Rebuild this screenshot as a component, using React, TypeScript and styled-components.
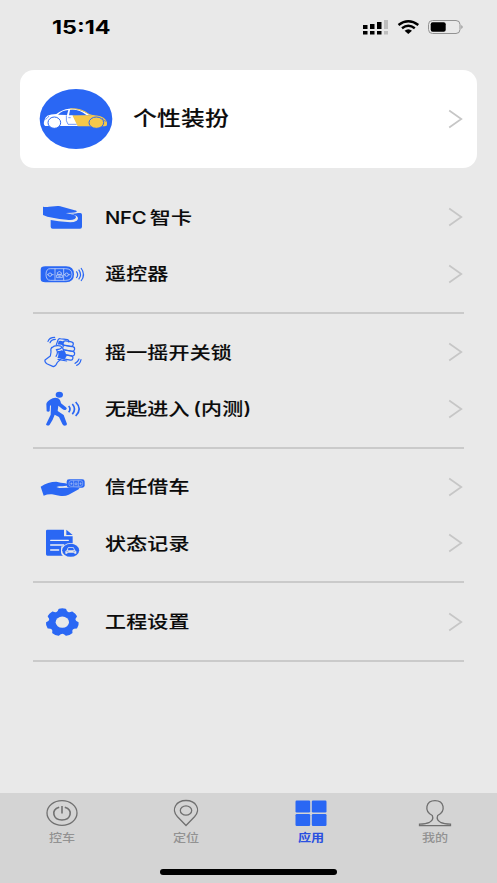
import React from 'react';
import styled, { createGlobalStyle } from 'styled-components';

const BLUE = '#2a67f4';
const SANS = '"Noto Sans CJK SC", sans-serif';

const GlobalStyle = createGlobalStyle`
  *, *::before, *::after { box-sizing: border-box; }
  body { margin: 0; background: #e9e9e9; }
`;

const Screen = styled.div`
  display: flex;
  flex-direction: column;
  width: 497px;
  height: 883px;
  overflow: hidden;
  background: #e9e9e9;
  color: #0b0b0b;
  font-family: ${SANS};
`;

const StatusBar = styled.header`
  display: flex;
  align-items: center;
  justify-content: space-between;
  height: 54px;
  padding: 0 33px 0 52px;
`;

const Clock = styled.time`
  font: 700 18.5px/20px Inter, sans-serif;
  color: #000;
  transform: scaleX(1.26);
  transform-origin: left center;
`;

const StatusIcons = styled.svg`
  width: 101px;
  height: 18px;
  display: block;
`;

const Card = styled.button`
  display: flex;
  align-items: center;
  flex: none;
  width: 457px;
  height: 98px;
  margin: 15.5px 20px 21px;
  padding: 0 14px 0 19px;
  border: 0;
  border-radius: 14px;
  background: #fff;
  color: inherit;
  text-align: left;
`;

const CarBadge = styled.svg`
  width: 74px;
  height: 62px;
  margin-right: 20px;
`;

const Label = styled.span<{ $size?: number }>`
  flex: 1;
  padding-top: 1px;
  font: 500 ${(p) => p.$size ?? 17.6}px/28px Inter, ${SANS};
  letter-spacing: 0.2px;
  word-spacing: -2px;
  white-space: nowrap;
  -webkit-text-stroke: 0.12px currentColor;
  transform: scaleX(1.19);
  transform-origin: left center;
`;

const Latin = styled.span`
  font-size: 17px;
  letter-spacing: -0.2px;
`;

const Chevron = styled.svg`
  width: 15px;
  height: 20px;
  flex: none;
  fill: none;
  stroke: #c6c6c6;
  stroke-width: 1.7;
`;

const Group = styled.section`
  width: 431px;
  margin: 0 33px 10px;
  padding-bottom: 9.8px;
  border-bottom: 2px solid #cacaca;
`;

const Row = styled.button`
  display: flex;
  align-items: center;
  width: 100%;
  height: 56.5px;
  padding: 0 1px 0 3px;
  border: 0;
  background: none;
  color: inherit;
  text-align: left;
`;

const RowIcon = styled.svg`
  width: 52px;
  height: 44px;
  flex: none;
  margin-right: 17px;
  fill: ${BLUE};
`;

const Menu = styled.main`
  flex: 1;
  padding-top: 0.5px;
`;

const TabBar = styled.nav`
  display: grid;
  grid-template-columns: repeat(4, 1fr);
  grid-template-rows: 76px 14px;
  height: 90px;
  background: #d4d4d4;
`;

const Tab = styled.button<{ $active?: boolean }>`
  display: flex;
  flex-direction: column;
  align-items: center;
  padding: 5px 0 0;
  border: 0;
  background: none;
  color: ${(p) => (p.$active ? '#2a50e0' : '#929292')};
  font: ${(p) => (p.$active ? 700 : 500)} 11px/16px ${SANS};
`;

const TabIcon = styled.svg`
  width: 34px;
  height: 30px;
  margin-bottom: 1px;
  fill: none;
  stroke: #707070;
  stroke-width: 1.3;
`;

const TabLabel = styled.span`
  transform: scaleX(1.19);
`;

const HomeIndicator = styled.div`
  grid-column: 1 / -1;
  justify-self: center;
  width: 177px;
  height: 5.5px;
  border-radius: 3px;
  background: #000;
`;

const Arrow = () => (
  <Chevron viewBox="0 0 15 20">
    <path d="M1.2 1.5 13.3 10 1.2 18.5" />
  </Chevron>
);

// Seven-toothed outline, slightly wider than tall, with curved valleys.
const gearPath = (() => {
  const step = (Math.PI * 2) / 7;
  const point = (angle: number, radius: number) =>
    `${(97 + Math.cos(angle) * radius * 1.19).toFixed(1)} ${(82 + Math.sin(angle) * radius).toFixed(1)}`;
  let d = '';
  for (let i = 0; i < 7; i += 1) {
    const a = -Math.PI / 2 + i * step;
    d += `${i ? '' : `M${point(a - 0.2, 39)}`}Q${point(a, 41)} ${point(a + 0.2, 39)}`;
    d += `Q${point(a + step / 2, 26)} ${point(a + step - 0.2, 39)}`;
  }
  return `${d}Z`;
})();

const CardHandIcon = () => (
  <RowIcon viewBox="18 15 156 132">
    <path d="M39 50Q49 52 57 50L83 48Q89 47 96 50L134 61Q143 63 139 66Q134 68 125 68L107 69Q122 72 134 76Q142 82 134 87Q125 92 110 89Q88 88 68 83Q51 81 39 75Z" />
    <path d="M144 69H151Q156 69 156 74V110Q156 116 150 116H68Q62 116 62 110V90Q85 95 112 96Q130 98 140 92Q148 85 140 78Q131 72 119 71Q137 72 144 69Z" />
  </RowIcon>
);

const RemoteIcon = () => (
  <RowIcon viewBox="18 186 156 132">
    <path d="M46 229H108Q132 229 132 253Q132 277 108 277H46Q32 277 32 267V239Q32 229 46 229Z" />
    <g fill="none" stroke="#e9edf7" strokeWidth="2">
      <path d="M61 236H106Q126 236 126 253Q126 271 106 271H61Q48 271 48 253Q48 236 61 236ZM75 236V271M101 236V271" />
      <ellipse cx="60" cy="254" rx="5" ry="5" />
      <path d="M65 254H71M54 254H51" />
      <ellipse cx="110" cy="254" rx="5" ry="5" />
      <path d="M115 254H121M105 254H102" />
      <path d="M82 253V248Q88 241 94 248V253ZM80 255H97V263H80ZM85 259H92" />
    </g>
    <g fill="none" stroke={BLUE} strokeWidth="3.6">
      <path d="M139 244Q147 254 139 264M146 239Q157 254 146 268M153 234Q168 254 153 273" />
    </g>
  </RowIcon>
);

const ShakeIcon = () => (
  <RowIcon viewBox="18 16 156 132">
    <g fill="none" stroke={BLUE} strokeWidth="3.6" strokeLinejoin="round" strokeLinecap="round">
      <path d="M54 50Q58 38 74 38M60 54Q64 44 76 44" />
      <path d="M153 105Q150 119 140 122M147 103Q144 112 135 116" />
      <path d="M79 60 84 46Q86 41 91 42L112 45Q118 47 116 52M66 68Q61 72 63 82L61 94 45 106Q43 113 52 118L70 126Q78 124 82 113L92 104" />
      <path d="M66 69Q72 62 85 63Q96 63 95 69Q92 74 79 75Q86 83 78 95" />
      <rect x="99" y="50" width="31" height="14" rx="7" transform="rotate(10 114 57)" />
      <rect x="98" y="64" width="36" height="14" rx="7" transform="rotate(10 116 71)" />
      <rect x="98" y="78" width="36" height="14" rx="7" transform="rotate(10 116 85)" />
      <rect x="99" y="92" width="30" height="13" rx="6.5" transform="rotate(10 114 98)" />
      <path d="M84 104 110 109" />
    </g>
    <path d="M83 78Q90 80 94 77L105 80 110 94 103 105 82 99Q88 90 83 78ZM91 48 105 51 99 56V64Q94 59 83 60L86 49Z" />
  </RowIcon>
);

const WalkIcon = () => (
  <RowIcon viewBox="18 186 156 132">
    <ellipse cx="88" cy="209" rx="11" ry="9" />
    <path d="M68 220Q76 216 84 220Q91 223 93 235L108 247Q113 251 108 254Q103 257 97 252L85 242 83 258 101 270 111 297Q111 302 104 302Q99 302 97 297L87 276 74 269 68 284 59 299Q56 303 50 301Q47 300 49 296L62 269 63 242 60 241 59 258Q56 262 50 259L49 237Q49 230 68 220Z" />
    <g fill="none" stroke={BLUE} strokeWidth="5">
      <path d="M116 243Q124 252 116 262M127 237Q140 252 127 268M137 231Q158 252 137 273" />
    </g>
  </RowIcon>
);

const LendIcon = () => (
  <RowIcon viewBox="18 0 156 132">
    <path d="M32 65Q54 50 79 50Q92 54 106 55Q114 57 112 61Q109 64 87 64L79 66 88 69 112 68Q134 66 145 69Q151 70 146 73L116 89Q104 95 88 92L66 88Q53 87 41 92Z" />
    <rect x="110" y="43" width="54" height="25" rx="7" />
    <g fill="none" stroke="#c7d4f5" strokeWidth="1.5">
      <rect x="117" y="47" width="41" height="17" rx="6" />
      <path d="M131 47V64M145 47V64M121 56H128M148 56H155M135 54H141V59H135ZM124 52V60M152 52V60" />
    </g>
  </RowIcon>
);

const RecordIcon = () => (
  <RowIcon viewBox="18 169 156 132">
    <path d="M52 195H102V215H128V245H94Q90 272 99 273H52Q48 273 48 269V199Q48 195 52 195ZM109 195 128 211H109Z" />
    <path d="M62 227H115M62 241H101M62 256H86" stroke="#edf0f5" strokeWidth="4" strokeLinecap="round" />
    <ellipse cx="122" cy="257" rx="28" ry="22" fill="#e9e9e9" />
    <ellipse cx="122" cy="257" rx="25.5" ry="19.5" />
    <path d="M110 257 113 250Q114 247 118 247H127Q131 247 132 250L135 257 139 260V267H133V264H112V267H106V260Z" fill="#e9e9e9" />
    <path d="M114 256 116 250H129L131 256ZM109 260H115M130 260H136" stroke={BLUE} strokeWidth="1.5" />
  </RowIcon>
);

const GearIcon = () => (
  <RowIcon viewBox="18 15 156 132">
    <path d={gearPath} stroke={BLUE} strokeWidth="5" strokeLinejoin="round" />
    <ellipse cx="97" cy="81.5" rx="20" ry="17" fill="#e9e9e9" />
  </RowIcon>
);

const groups = [
  [{ latin: 'NFC', label: ' 智卡', Icon: CardHandIcon }, { label: '遥控器', Icon: RemoteIcon }],
  [{ label: '摇一摇开关锁', Icon: ShakeIcon }, { label: '无匙进入 (内测)', Icon: WalkIcon }],
  [{ label: '信任借车', Icon: LendIcon }, { label: '状态记录', Icon: RecordIcon }],
  [{ label: '工程设置', Icon: GearIcon }],
] as { latin?: string; label: string; Icon: React.FC }[][];

export default function App() {
  return (
    <Screen>
      <GlobalStyle />
      <StatusBar>
        <Clock>15:14</Clock>
        <StatusIcons viewBox="0 0 101 18">
          <path d="M0 7h4.500v4H0zM7 6h4.500v5H7zM14 4h4.500v7h-4.500zM0 13h4.500v3.500H0zM7 13h4.500v3.500H7zM14 13h4.500v3.500h-4.500z" />
          <path d="M21 2h4v9h-4zM21 13h4v3.500h-4z" fill="#bdbdbd" />
          <g fill="none" stroke="#000" strokeWidth="2.4">
            <path d="M35.500 7Q45.300-.5 55.300 7M39 10.300Q45.300 5.200 51.800 10.300" />
          </g>
          <path d="M41.600 12.800Q45.300 9.500 49 12.800L45.300 16Z" />
          <rect x="65.500" y="2.500" width="31.500" height="13" rx="4" fill="none" stroke="#929292" />
          <rect x="67.700" y="4.300" width="15" height="9.500" rx="2" />
          <path d="M98.500 7Q100.500 9 98.500 11Z" fill="#777" />
        </StatusIcons>
      </StatusBar>

      <Card>
        <CarBadge viewBox="58 67 222 186">
          <ellipse cx="169" cy="160" rx="109" ry="90" fill={BLUE} />
          <path d="M76 180Q70 176 74 165Q76 154 83 150Q93 145 110 145Q128 131 148 129Q170 127 190 137L214 149H160L176 181H76Z" fill="#fff" />
          <path d="M158 149H218Q247 150 256 160Q265 170 261 180L256 182H174Z" fill="#f6c84b" />
          <path d="M151 130Q184 126 209 147L225 151" fill="none" stroke="#f6c84b" strokeWidth="3" />
          <path d="M115 147Q128 134 146 133L142 148ZM151 133Q178 130 200 148L148 149Z" fill={BLUE} />
          <path d="M140 149Q138 168 145 176H171M146 156H153M77 161Q82 160 88 151M247 157Q251 166 259 167" fill="none" stroke={BLUE} strokeWidth="2" />
          <ellipse cx="104" cy="171" rx="19" ry="17" fill="#fff" stroke={BLUE} strokeWidth="3" />
          <ellipse cx="230" cy="171" rx="22" ry="17" fill="#f6c84b" stroke={BLUE} strokeWidth="3" />
        </CarBadge>
        <Label $size={20}>个性装扮</Label>
        <Arrow />
      </Card>

      <Menu>
        {groups.map((rows) => (
          <Group key={rows[0].label}>
            {rows.map(({ latin, label, Icon }) => (
              <Row key={label}>
                <Icon />
                <Label>
                  {latin && <Latin>{latin}</Latin>}
                  {label}
                </Label>
                <Arrow />
              </Row>
            ))}
          </Group>
        ))}
      </Menu>

      <TabBar>
        <Tab>
          <TabIcon viewBox="0 0 34 30">
            <ellipse cx="17" cy="15" rx="15" ry="12.3" />
            <path d="M14.2 9.3C5.5 12 8 22 17 22S28.500 12 19.800 9.300M17 8V15.500" strokeWidth="1.600" />
          </TabIcon>
          <TabLabel>控车</TabLabel>
        </Tab>
        <Tab>
          <TabIcon viewBox="0 0 34 30">
            <path d="M17 27.500 8.500 18.800C1.500 11 7.500 2.500 17 2.500S32.500 11 25.500 18.800Z" />
            <ellipse cx="17" cy="12.500" rx="5.700" ry="4.700" />
          </TabIcon>
          <TabLabel>定位</TabLabel>
        </Tab>
        <Tab $active>
          <TabIcon viewBox="0 0 34 30">
            <g fill={BLUE} stroke="none">
              <rect x="1.500" y="2.500" width="14.700" height="12" rx="1.200" />
              <rect x="17.800" y="2.500" width="14.700" height="12" rx="1.200" />
              <rect x="1.500" y="16" width="14.700" height="12" rx="1.200" />
              <rect x="17.800" y="16" width="14.700" height="12" rx="1.200" />
            </g>
          </TabIcon>
          <TabLabel>应用</TabLabel>
        </Tab>
        <Tab>
          <TabIcon viewBox="0 0 34 30">
            <path d="M14.300 17.500C5.500 13 8 2.700 17 2.700S28.500 13 19.700 17.500C18.500 20.500 19.800 22.800 22.500 24.300Q26 26 32.500 26.200V27.700H1.500V26.200Q8 26 11.500 24.300C14.200 22.800 15.500 20.500 14.300 17.500Z" />
          </TabIcon>
          <TabLabel>我的</TabLabel>
        </Tab>
        <HomeIndicator />
      </TabBar>
    </Screen>
  );
}
